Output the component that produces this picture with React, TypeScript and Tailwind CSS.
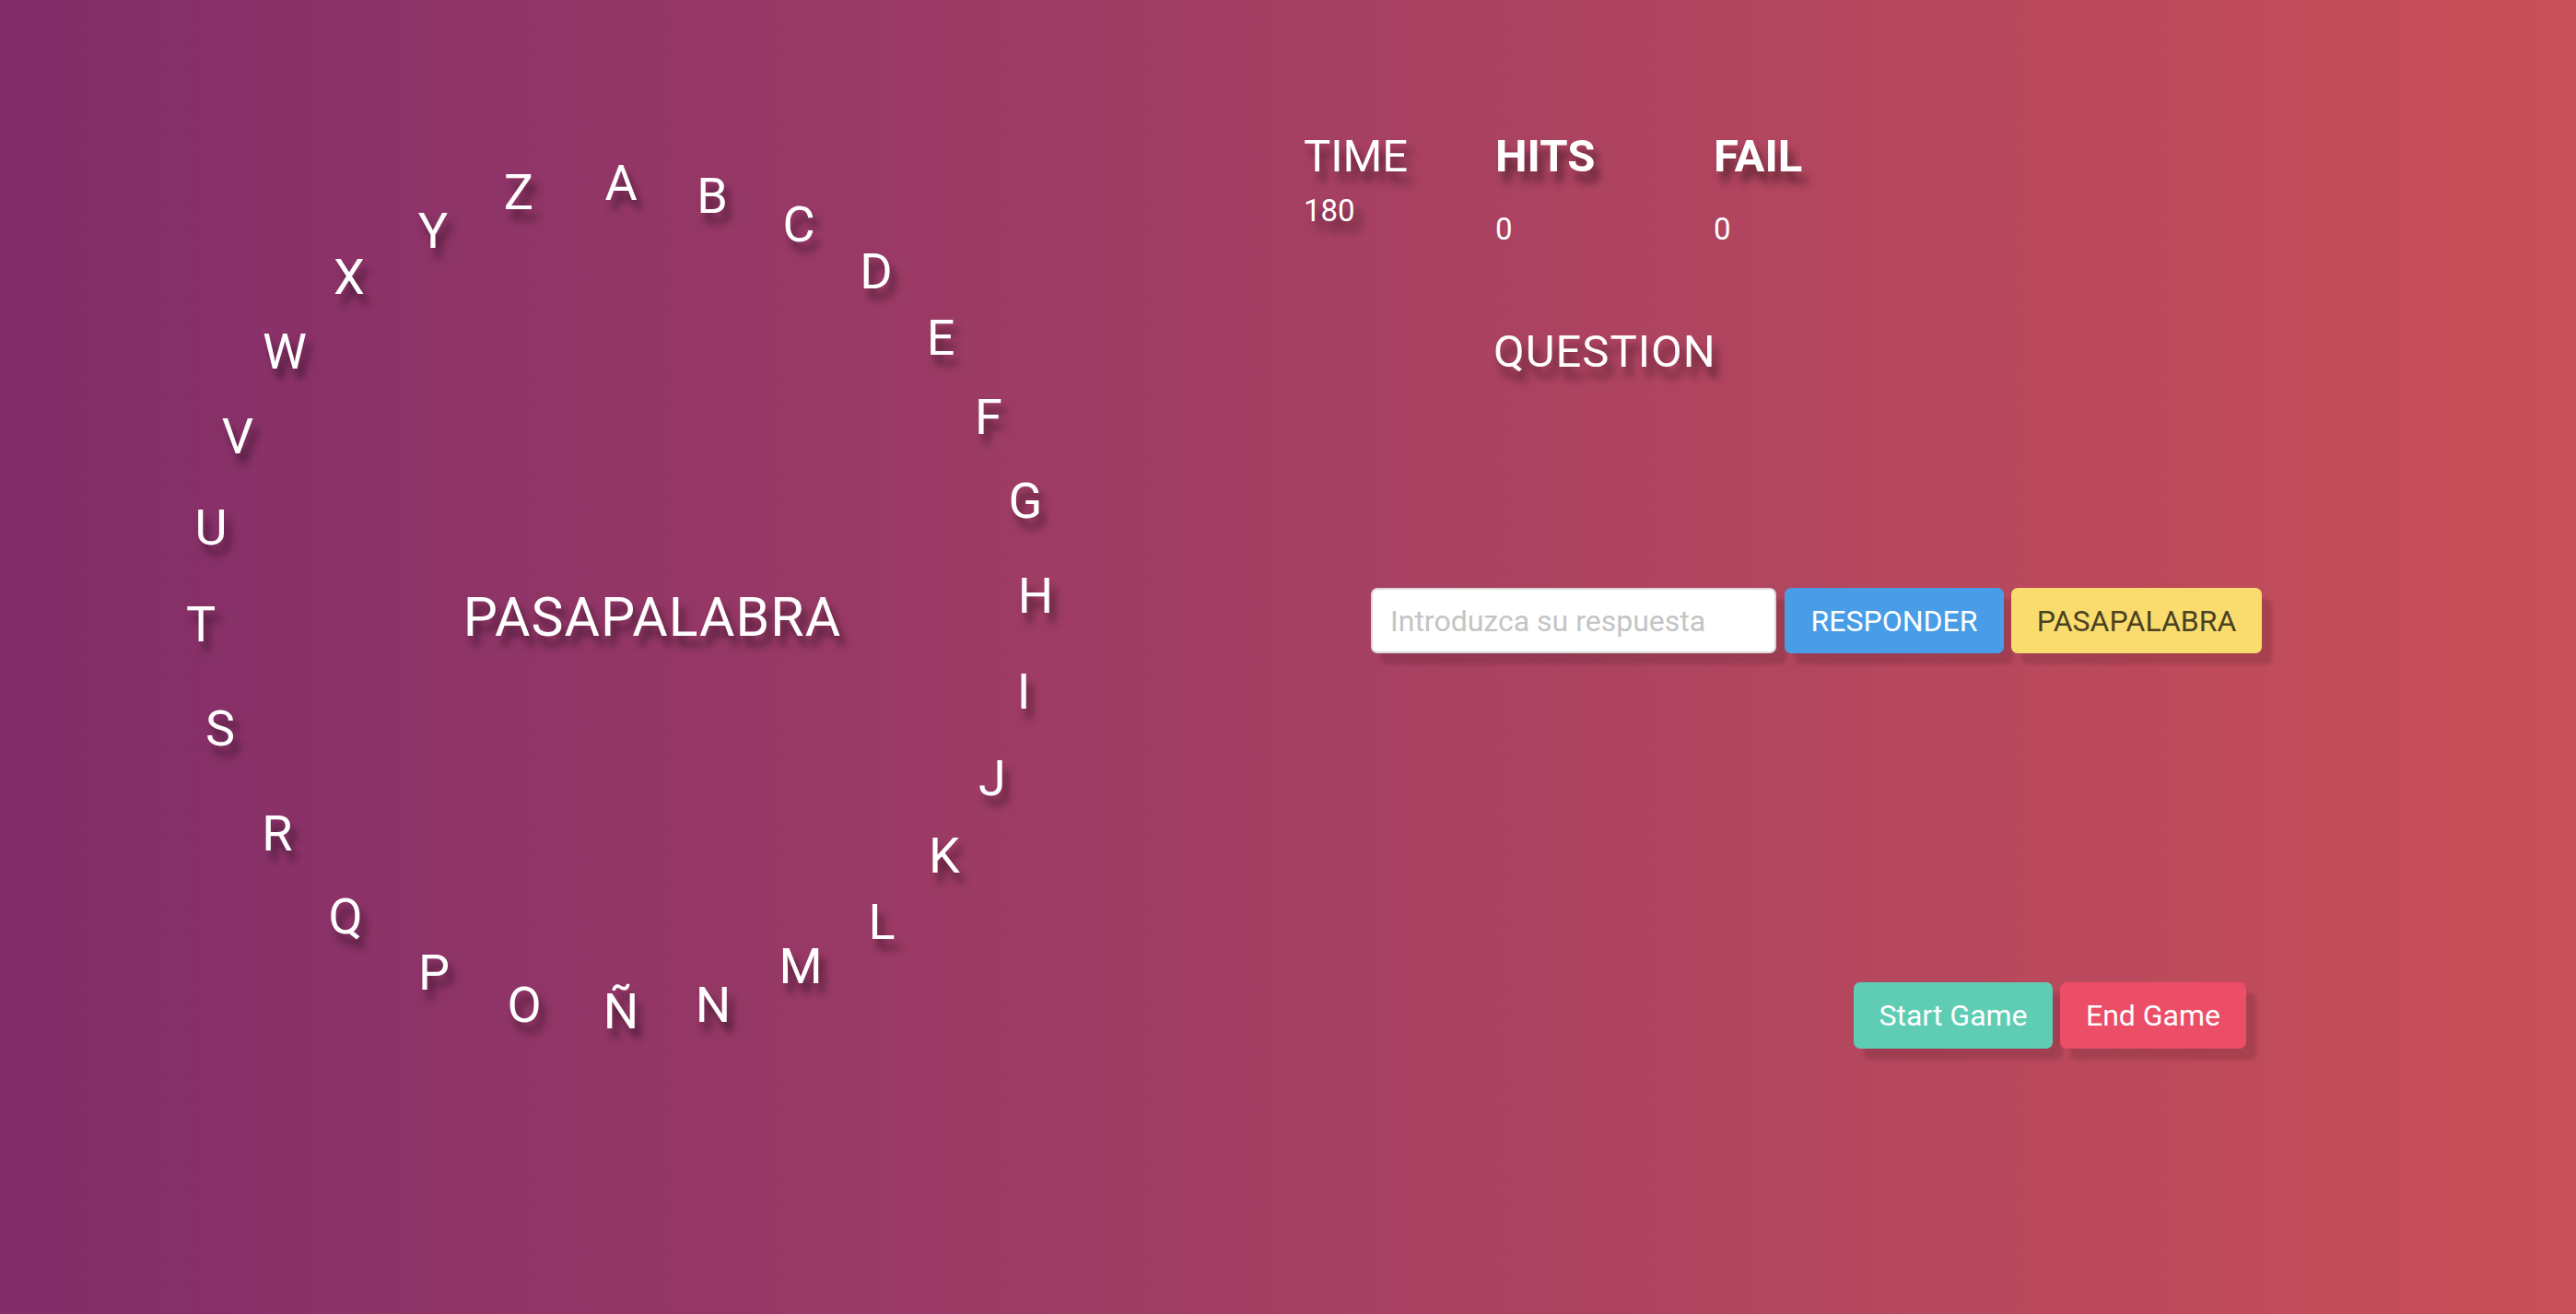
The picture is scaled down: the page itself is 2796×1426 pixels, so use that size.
import React from "react";

const letters: [string, number, number][] = [
  ["A", 674, 199],
  ["B", 773, 213],
  ["C", 867, 244],
  ["D", 951, 295],
  ["E", 1021, 367],
  ["F", 1073, 453],
  ["G", 1113, 544],
  ["H", 1124, 647],
  ["I", 1111, 751],
  ["J", 1077, 845],
  ["K", 1025, 929],
  ["L", 957, 1001],
  ["M", 869, 1049],
  ["N", 774, 1091],
  ["Ñ", 674, 1098],
  ["O", 569, 1091],
  ["P", 471, 1056],
  ["Q", 375, 995],
  ["R", 301, 905],
  ["S", 239, 791],
  ["T", 218, 678],
  ["U", 229, 573],
  ["V", 258, 474],
  ["W", 309, 382],
  ["X", 379, 301],
  ["Y", 470, 251],
  ["Z", 563, 209],
];

export default function App() {
  return (
    <div className="grid grid-cols-2 w-full h-[1426px] overflow-hidden bg-linear-to-r from-[#822d69] to-[#c94f57] text-white font-[Roboto,sans-serif]">
      <div className="relative">
        {letters.map(([l, x, y]) => (
          <div
            key={l}
            className="absolute -translate-x-1/2 -translate-y-1/2 text-[54px] leading-[54px] [text-shadow:6px_11px_9px_rgba(0,0,0,0.45)]"
            style={{ left: x, top: y }}
          >
            {l}
          </div>
        ))}
        <div
          className="absolute -translate-x-1/2 -translate-y-1/2 text-[59px] leading-[59px] tracking-[1px] whitespace-nowrap [text-shadow:6px_11px_9px_rgba(0,0,0,0.45)]"
          style={{ left: 708, top: 669 }}
        >
          PASAPALABRA
        </div>
      </div>

      <div className="flex flex-col pt-[145px]">
        <div className="flex ml-[17px]">
          <div className="w-[208px] flex flex-col">
            <div className="text-[49px] leading-[49px] [text-shadow:6px_12px_10px_rgba(0,0,0,0.45)]">TIME</div>
            <div className="text-[33px] leading-[34px] mt-[18px] [text-shadow:8px_12px_10px_rgba(0,0,0,0.45)]">180</div>
          </div>
          <div className="w-[237px] flex flex-col">
            <div className="text-[49px] leading-[49px] font-bold [text-shadow:6px_12px_10px_rgba(0,0,0,0.45)]">HITS</div>
            <div className="text-[33px] leading-[34px] mt-[38px]">0</div>
          </div>
          <div className="flex flex-col">
            <div className="text-[49px] leading-[49px] font-bold [text-shadow:6px_12px_10px_rgba(0,0,0,0.45)]">FAIL</div>
            <div className="text-[33px] leading-[34px] mt-[38px]">0</div>
          </div>
        </div>

        <div className="mt-[91px] ml-[223px] text-[49px] leading-[49px] tracking-[1px] [text-shadow:6px_12px_10px_rgba(0,0,0,0.45)]">
          QUESTION
        </div>

        <div className="flex mt-[232px] ml-[90px]">
          <input
            type="text"
            placeholder="Introduzca su respuesta"
            className="w-[440px] h-[71px] bg-white border-2 border-[#dbdbdb] rounded-[7px] pl-[19px] text-[32px] text-[#363636] placeholder:text-[#c4c4c4] outline-none shadow-[11px_12px_4px_rgba(0,0,0,0.13)]"
          />
          <button className="ml-[9px] w-[238px] h-[71px] rounded-[7px] bg-[#489de6] text-white text-[32px] shadow-[11px_12px_4px_rgba(0,0,0,0.13)]">
            RESPONDER
          </button>
          <button className="ml-[8px] w-[272px] h-[71px] rounded-[7px] bg-[#f9dc6d] text-[#4a4222] text-[32px] shadow-[11px_12px_4px_rgba(0,0,0,0.13)]">
            PASAPALABRA
          </button>
        </div>

        <div className="flex mt-[357px] ml-[614px]">
          <button className="w-[216px] h-[72px] rounded-[7px] bg-[#5ecdb4] text-white text-[32px] shadow-[11px_12px_4px_rgba(0,0,0,0.13)]">
            Start Game
          </button>
          <button className="ml-[8px] w-[202px] h-[72px] rounded-[7px] bg-[#ec4e67] text-white text-[32px] shadow-[11px_12px_4px_rgba(0,0,0,0.13)]">
            End Game
          </button>
        </div>
      </div>
    </div>
  );
}
